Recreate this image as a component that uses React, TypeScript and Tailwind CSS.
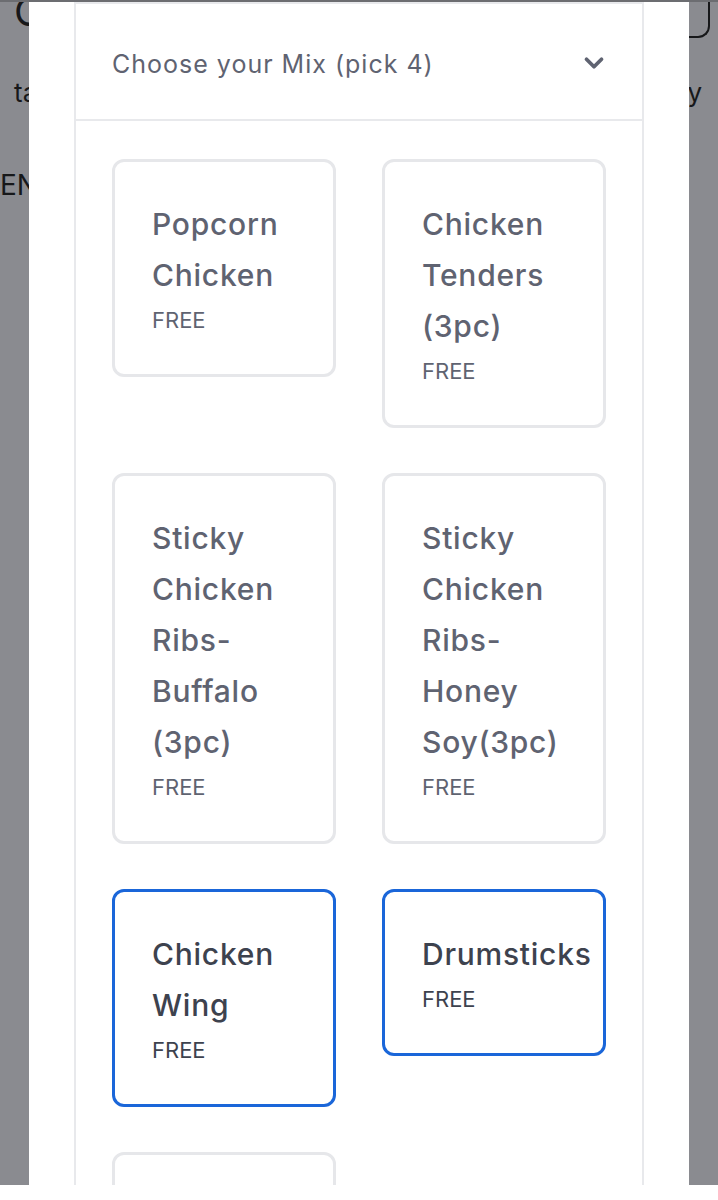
import { ChevronDown } from 'lucide-react'

type Item = { name: string; price: string; selected?: boolean }

const ITEMS: Item[] = [
  { name: 'Popcorn Chicken', price: 'FREE' },
  { name: 'Chicken Tenders (3pc)', price: 'FREE' },
  { name: 'Sticky Chicken Ribs-Buffalo (3pc)', price: 'FREE' },
  { name: 'Sticky Chicken Ribs-Honey Soy(3pc)', price: 'FREE' },
  { name: 'Chicken Wing', price: 'FREE', selected: true },
  { name: 'Drumsticks', price: 'FREE', selected: true },
  { name: 'Corn on the Cob', price: 'FREE' },
]

function MixCard({ item }: { item: Item }) {
  return (
    <button
      className={
        item.selected
          ? 'rounded-[12px] border-[3px] border-[#1a66d9] bg-white pt-[37px] pb-[39px] pl-[37px] pr-[8px] text-left text-[#3d424e]'
          : 'rounded-[12px] border-[3px] border-[#e6e7ea] bg-white pt-[37px] pb-[39px] pl-[37px] pr-[8px] text-left text-[#5f6371]'
      }
    >
      <div className="text-[30px] leading-[51px] font-medium tracking-[0.025em]">{item.name}</div>
      <div className="mt-[4px] text-[22px] leading-[30px]">{item.price}</div>
    </button>
  )
}

export default function App() {
  return (
    <div className="bg-white" style={{ fontFamily: 'Inter, "Noto Sans", sans-serif' }}>
      <div className="relative h-[1185px] overflow-hidden border-t-2 border-[#6c6d71] bg-[#8a8b90]">
        {/* page behind the overlay */}
        <div className="flex flex-col text-[#17181a]">
          <div className="flex items-start justify-between">
            <span className="-mt-[14px] pl-[14px] text-[40px] leading-[48px]">C</span>
            <div className="mr-[8px] -mt-[4px] h-[40px] w-[60px] rounded-br-[12px] border-r-2 border-b-2 border-[#17181a]" />
          </div>
          <div className="mt-[40px] flex items-center justify-between px-[14px] text-[26px] leading-[30px]">
            <span>ta</span>
            <span className="pr-[2px]">y</span>
          </div>
          <div className="mt-[62px] text-[28px] leading-[30px]">EN</div>
        </div>

        {/* modal */}
        <div className="absolute inset-y-0 left-[29px] w-[660px] bg-white px-[45px]">
          <div className="h-full border-x-2 border-t-2 border-[#e8e9ec]">
            <div className="flex h-[117px] items-center justify-between border-b-2 border-[#e8e9ec] pl-[36px] pr-[33px]">
              <span className="pt-[6px] text-[25px] tracking-[0.04em] text-[#5f6371]">Choose your Mix (pick 4)</span>
              <ChevronDown className="mt-[2px] h-[30px] w-[30px] text-[#5f6371]" strokeWidth={3} />
            </div>
            <div className="grid grid-cols-2 items-start gap-x-[46px] gap-y-[45px] px-[36px] pt-[38px]">
              {ITEMS.map(item => (
                <MixCard key={item.name} item={item} />
              ))}
            </div>
          </div>
        </div>
      </div>
    </div>
  )
}
